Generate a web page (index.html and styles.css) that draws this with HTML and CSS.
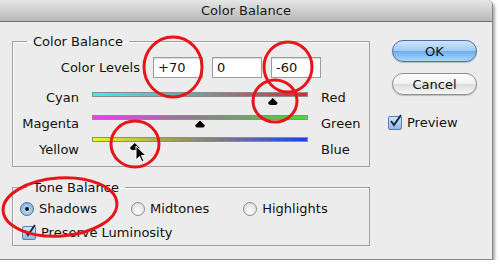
FILE: index.html
```html
<!DOCTYPE html>
<html>
<head>
<meta charset="utf-8">
<link rel="stylesheet" href="styles.css">
</head>
<body>
<div class="win">
  <div class="titlebar">Color Balance</div>
  <div class="content">
    <div class="left">
      <fieldset class="group cb">
        <legend>Color Balance</legend>
        <div class="levels">
          <span class="levels-label">Color Levels</span>
          <span class="field">+70</span>
          <span class="field">0</span>
          <span class="field">-60</span>
        </div>
        <div class="sliders">
          <div class="lbls lbls-l">
            <span>Cyan</span>
            <span>Magenta</span>
            <span>Yellow</span>
          </div>
          <div class="tracks">
            <div class="track t-cr"><span class="thumb" style="left:84%"></span></div>
            <div class="track t-mg"><span class="thumb" style="left:50%"></span></div>
            <div class="track t-yb"><span class="thumb" style="left:19.5%"></span></div>
          </div>
          <div class="lbls lbls-r">
            <span>Red</span>
            <span>Green</span>
            <span>Blue</span>
          </div>
        </div>
      </fieldset>
      <fieldset class="group tb">
        <legend>Tone Balance</legend>
        <div class="radios">
          <label class="opt"><span class="radio on"></span>Shadows</label>
          <label class="opt"><span class="radio"></span>Midtones</label>
          <label class="opt"><span class="radio"></span>Highlights</label>
        </div>
        <label class="opt"><span class="check"><svg viewBox="0 0 14 14" width="14" height="14"><path d="M3 7 L6 11 L13 1" fill="none" stroke="#1a2a4a" stroke-width="2"/></svg></span>Preserve Luminosity</label>
      </fieldset>
    </div>
    <div class="right">
      <button class="btn primary">OK</button>
      <button class="btn">Cancel</button>
      <label class="opt preview"><span class="check"><svg viewBox="0 0 14 14" width="14" height="14"><path d="M3 7 L6 11 L13 1" fill="none" stroke="#1a2a4a" stroke-width="2"/></svg></span>Preview</label>
    </div>
  </div>
  <svg class="marks" width="500" height="268" viewBox="0 0 500 268">
    <g fill="none" stroke="#e8141a" stroke-width="3">
      <ellipse cx="173" cy="67" rx="29" ry="30"/>
      <ellipse cx="288" cy="67" rx="24" ry="25"/>
      <ellipse cx="275" cy="101" rx="22" ry="21"/>
      <ellipse cx="135" cy="144" rx="24" ry="23"/>
      <ellipse cx="60" cy="207" rx="57" ry="29" transform="rotate(-4 60 207)"/>
    </g>
    <path d="M136 146 L136 160 L139.5 156.5 L142 162 L144 161 L141.5 155.5 L146 155.5 Z" fill="#000" stroke="#fff" stroke-width="1"/>
  </svg>
</div>
</body>
</html>
```
FILE: styles.css
```css
html, body {
  margin: 0;
  padding: 0;
  background: #ffffff;
}
body {
  font-family: "DejaVu Sans", "Liberation Sans", sans-serif;
  font-size: 13px;
  color: #111;
}
.win {
  position: relative;
  width: 493px;
  height: 260px;
  background: #ececec;
  box-sizing: border-box;
  border-right: 1px solid #8a8a8a;
  border-bottom: 1px solid #8a8a8a;
  border-top-right-radius: 5px;
  box-shadow: 2px 3px 3px rgba(0,0,0,0.35);
}
.titlebar {
  height: 22px;
  box-sizing: border-box;
  border-bottom: 1px solid #6e6e6e;
  background: linear-gradient(#e6e6e6, #b8b8b8);
  border-top-right-radius: 5px;
  text-align: center;
  line-height: 22px;
  font-size: 13px;
  color: #1a1a1a;
}
.content {
  display: flex;
  align-items: flex-start;
}
.left {
  margin-left: 12px;
  width: 358px;
}
.group {
  margin: 0;
  padding: 0;
  border: 1px solid #a0a0a0;
  box-shadow: inset 1px 1px 0 #fafafa;
  min-width: 0;
}
.group legend {
  margin-left: 14px;
  padding: 0 6px 0 6px;
  line-height: 15px;
}
.cb {
  margin-top: 12px;
  height: 133px;
  box-sizing: border-box;
}
.levels {
  display: flex;
  align-items: center;
  margin-top: 8px;
  gap: 9px;
}
.levels-label {
  width: 127px;
  text-align: right;
  margin-right: 4px;
}
.field {
  display: block;
  width: 50px;
  height: 21px;
  box-sizing: border-box;
  background: #fff;
  border: 1px solid #9c9c9c;
  box-shadow: inset 0 1px 1px rgba(0,0,0,0.15);
  padding-left: 4px;
  line-height: 19px;
}
.sliders {
  display: flex;
  margin-top: 10px;
}
.lbls {
  display: flex;
  flex-direction: column;
  gap: 10px;
  line-height: 16px;
}
.lbls-l {
  width: 66px;
  text-align: right;
  padding-top: 2px;
}
.lbls-r {
  padding-top: 2px;
  margin-left: 13px;
}
.tracks {
  display: flex;
  flex-direction: column;
  gap: 17.5px;
  margin-left: 13px;
  width: 216px;
  padding-top: 4px;
}
.track {
  position: relative;
  height: 5px;
  box-sizing: border-box;
  border: 1px solid #8c8c8c;
}
.t-cr { background: linear-gradient(90deg, #3af0ee, #7a9a9a 50%, #e8203a); }
.t-mg { background: linear-gradient(90deg, #ee3ef0, #8a808a 50%, #4ed83a); }
.t-yb { background: linear-gradient(90deg, #f4f420, #9a9660 40%, #7a7a8a 60%, #1c40f0); }
.thumb {
  position: absolute;
  top: 5px;
  width: 10px;
  height: 7px;
  margin-left: -5px;
  background: #000;
  clip-path: polygon(50% 0, 100% 70%, 90% 100%, 10% 100%, 0 70%);
  border-radius: 0 0 3px 3px;
}
.tb {
  margin-top: 13px;
  height: 66px;
  box-sizing: border-box;
}
.radios {
  display: flex;
  gap: 0;
  margin-top: 6px;
}
.opt {
  display: flex;
  align-items: center;
  line-height: 16px;
}
.radios .opt { margin-left: 7px; }
.radios .opt + .opt { margin-left: 34px; }
.radio {
  width: 14px;
  height: 14px;
  border-radius: 50%;
  box-sizing: border-box;
  border: 1px solid #8e8e8e;
  background: radial-gradient(circle at 50% 70%, #ffffff, #d4d4d4);
  margin-right: 5px;
  position: relative;
}
.radio.on {
  border-color: #4a6e9e;
  background: radial-gradient(circle at 50% 60%, #cfe4f8, #6ea2d6);
}
.radio.on::after {
  content: "";
  position: absolute;
  left: 4px;
  top: 4px;
  width: 4px;
  height: 4px;
  border-radius: 50%;
  background: #111;
}
.check {
  width: 14px;
  height: 14px;
  box-sizing: border-box;
  border: 1px solid #5d7ea8;
  border-radius: 2px;
  background: linear-gradient(#d4e6f8, #8fb8e2);
  margin-right: 5px;
  display: flex;
}
.check svg { margin: -3px 0 0 -1px; overflow: visible; }
.tb > .opt { margin: 8px 0 0 9px; }
.right {
  margin-left: 22px;
  display: flex;
  flex-direction: column;
  align-items: flex-start;
  padding-top: 18px;
}
.btn {
  width: 85px;
  height: 22px;
  border-radius: 11px;
  border: 1px solid #8e8e8e;
  background: linear-gradient(#ffffff, #f0f0f0 50%, #dcdcdc 51%, #f6f6f6);
  font-family: inherit;
  font-size: 13px;
  color: #111;
  padding: 0;
  margin-bottom: 11px;
  box-shadow: 0 1px 1px rgba(0,0,0,0.2);
}
.btn.primary {
  border-color: #4a6fa8;
  background: linear-gradient(#cfe6fb, #9fcaf3 50%, #6aaee9 51%, #a8d6fb);
}
.preview { margin-left: -4px; margin-top: 9px; }
.marks {
  position: absolute;
  left: 0;
  top: 0;
  pointer-events: none;
}
```
